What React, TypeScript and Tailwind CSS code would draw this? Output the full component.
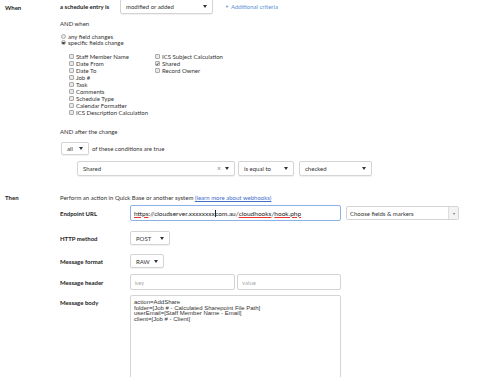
import React from 'react'

const Caret = () => (
	<svg width="4" height="3" viewBox="0 0 4 3" className="shrink-0">
		<path d="M0 0 L4 0 L2 3 Z" fill="#333" />
	</svg>
)

const Box = ({ on }: { on?: boolean }) => (
	<span className="w-[5px] h-[5px] mr-[2px] shrink-0 border-[0.5px] border-[#aaa] bg-[#e9e9e9] rounded-[1px] flex items-center justify-center">
		{on && (
			<svg width="4" height="4" viewBox="0 0 4 4">
				<path d="M0.5 2 L1.6 3.2 L3.6 0.4" stroke="#222" strokeWidth="0.9" fill="none" />
			</svg>
		)}
	</span>
)

const Radio = ({ on }: { on?: boolean }) => (
	<span className="w-[5px] h-[5px] mr-[2px] shrink-0 rounded-full border-[0.5px] border-[#aaa] bg-[#e9e9e9] flex items-center justify-center">
		{on && <span className="w-[2.5px] h-[2.5px] rounded-full bg-[#444]"></span>}
	</span>
)

const Check = ({ label, on }: { label: string, on?: boolean }) => (
	<div className="h-[7px] flex items-center whitespace-nowrap">
		<Box on={on} />
		<span>{label}</span>
	</div>
)

const Select = ({ text, w, h = 'h-[14px]' }: { text: string, w: string, h?: string }) => (
	<div className={`${w} ${h} shrink-0 flex items-center justify-between px-[5px] border border-[#d4d4d4] rounded-[2px] bg-white shadow-[0_1px_1px_rgba(0,0,0,0.06)]`}>
		<span className="whitespace-nowrap">{text}</span>
		<Caret />
	</div>
)

const Label = ({ text }: { text: string }) => (
	<div className="w-[70px] shrink-0 font-bold text-[#222]">{text}</div>
)

const Spell = ({ children }: { children: React.ReactNode }) => (
	<span className="underline decoration-[#e33] decoration-[0.6px] underline-offset-[1px]">{children}</span>
)

const App = () => {
	const col1 = ['Staff Member Name', 'Date From', 'Date To', 'Job #', 'Task', 'Comments', 'Schedule Type', 'Calendar Formatter', 'ICS Description Calculation']

	return (
		<div className="w-[490px] h-[377px] overflow-hidden bg-white font-['Lato',sans-serif] text-[6px] leading-[7px] text-[#333]">

			{/* When */}
			<div className="flex">
				<div className="w-[60px] shrink-0 pl-[5px] pt-[4px] font-bold text-[#222]">When</div>

				<div className="flex-1">
					<div className="flex items-center h-[14px] -mt-[1px]">
						<div className="w-[60px] shrink-0 font-bold text-[#222]">a schedule entry is</div>
						<Select text="modified or added" w="w-[93px]" h="h-[15px]" />
						<div className="ml-[12px] text-[#5b8fd8] flex items-center">
							<span className="mr-[2px] text-[4px]">▼</span>Additional criteria
						</div>
					</div>

					<div className="mt-[7px]">AND when</div>

					<div className="mt-[6px] ml-[1px]">
						<div className="h-[6.5px] flex items-center"><Radio />any field changes</div>
						<div className="h-[6.5px] flex items-center"><Radio on />specific fields change</div>
					</div>

					<div className="mt-[7px] ml-[9px] flex">
						<div className="w-[86px] shrink-0">
							{col1.map((c) => <Check key={c} label={c} />)}
						</div>
						<div>
							<Check label="ICS Subject Calculation" />
							<Check label="Shared" on />
							<Check label="Record Owner" />
						</div>
					</div>

					<div className="mt-[12px]">AND after the change</div>

					<div className="mt-[7px] ml-[1px] flex items-center">
						<Select text="all" w="w-[28px]" h="h-[13px]" />
						<span className="ml-[3px]">of these conditions are true</span>
					</div>

					<div className="mt-[6px] ml-[17px] flex items-center">
						<div className="w-[158px] h-[15px] shrink-0 flex items-center px-[5px] border border-[#d4d4d4] rounded-[2px] shadow-[0_1px_1px_rgba(0,0,0,0.06)]">
							<span className="flex-1">Shared</span>
							<span className="text-[#888] text-[7px] mr-[4px]">×</span>
							<Caret />
						</div>
						<div className="ml-[3px]"><Select text="is equal to" w="w-[56px]" h="h-[15px]" /></div>
						<div className="ml-[5px]"><Select text="checked" w="w-[73px]" h="h-[15px]" /></div>
					</div>
				</div>
			</div>

			{/* Then */}
			<div className="flex mt-[18px]">
				<div className="w-[60px] shrink-0 pl-[5px] font-bold text-[#222]">Then</div>

				<div className="flex-1">
					<div>
						Perform an action in Quick Base or another system <span className="text-[#3f6fc9] underline">(learn more about webhooks)</span>
					</div>

					<div className="mt-[4px] flex items-center">
						<Label text="Endpoint URL" />
						<div className="w-[211px] h-[16px] shrink-0 flex items-center px-[3px] border border-[#8ab0e6] rounded-[2px] text-[6.5px] text-[#222] whitespace-nowrap overflow-hidden">
							<Spell>https</Spell>
							<span>://cloudserver.xxxxxxxx</span>
							<span className="w-[0.6px] h-[7px] bg-[#222]"></span>
							<span>com.au/</span>
							<Spell>cloudhooks</Spell>
							<span>/</span>
							<Spell>hook.php</Spell>
						</div>
						<div className="ml-[5px] w-[113px] h-[14px] shrink-0 flex border border-[#d4d4d4] rounded-[2px]">
							<span className="flex-1 flex items-center px-[3px] whitespace-nowrap">Choose fields &amp; markers</span>
							<span className="w-[10px] border-l border-[#ddd] bg-[#f3f3f3] flex items-center justify-center text-[4px] text-[#777]">▾</span>
						</div>
					</div>

					<div className="mt-[10px] flex items-center">
						<Label text="HTTP method" />
						<Select text="POST" w="w-[40px]" />
					</div>

					<div className="mt-[9px] flex items-center">
						<Label text="Message format" />
						<Select text="RAW" w="w-[34px]" />
					</div>

					<div className="mt-[6px] flex items-center">
						<Label text="Message header" />
						<div className="w-[105px] h-[16px] shrink-0 flex items-center px-[4px] border border-[#d4d4d4] rounded-[2px] text-[#aaa]">key</div>
						<div className="ml-[2px] w-[104px] h-[16px] shrink-0 flex items-center px-[4px] border border-[#d4d4d4] rounded-[2px] text-[#aaa]">value</div>
					</div>

					<div className="mt-[5px] flex items-start">
						<div className="pt-[4px]"><Label text="Message body" /></div>
						<div className="w-[211px] h-[100px] shrink-0 px-[3px] pt-[4px] border border-[#d4d4d4] rounded-[2px] font-['Liberation_Sans',sans-serif] text-[6px] leading-[5.7px] text-[#333]">
							<div>action=AddShare</div>
							<div>folder=[Job # - Calculated Sharepoint File Path]</div>
							<div>userEmail=[Staff Member Name - Email]</div>
							<div>client=[Job # - Client]</div>
						</div>
					</div>
				</div>
			</div>
		</div>
	)
}

export default App
